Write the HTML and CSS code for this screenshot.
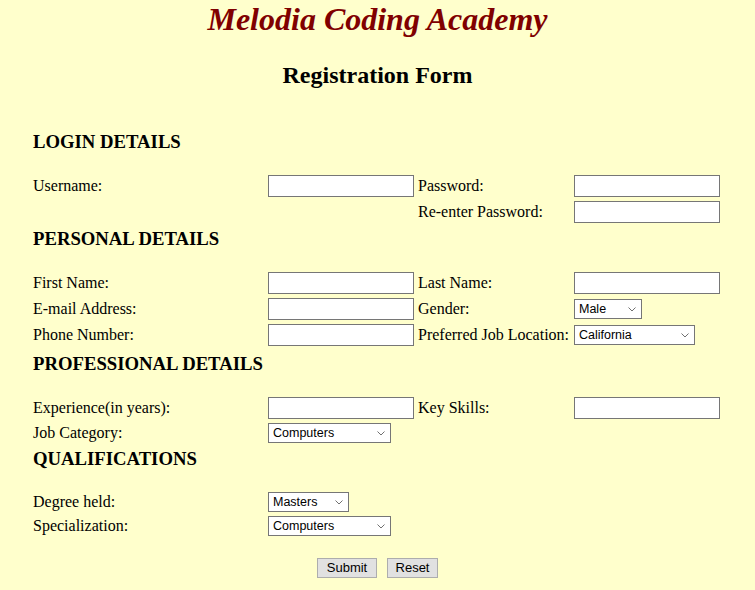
FILE: index.html
```html
<!DOCTYPE html>
<html lang="en">
<head>
<meta charset="utf-8">
<title>Melodia Coding Academy - Registration Form</title>
<link rel="stylesheet" href="styles.css">
</head>
<body>
<h1 class="title">Melodia Coding Academy</h1>
<h2 class="subtitle">Registration Form</h2>
<form class="form">
  <section class="section">
    <h3 class="section-title">LOGIN DETAILS</h3>
    <div class="grid">
      <label class="lbl">Username:</label>
      <input class="field" type="text">
      <label class="lbl">Password:</label>
      <input class="field" type="password">
      <label class="lbl col3">Re-enter Password:</label>
      <input class="field" type="password">
    </div>
  </section>

  <section class="section">
    <h3 class="section-title">PERSONAL DETAILS</h3>
    <div class="grid grid-tall">
      <label class="lbl">First Name:</label>
      <input class="field" type="text">
      <label class="lbl">Last Name:</label>
      <input class="field" type="text">

      <label class="lbl">E-mail Address:</label>
      <input class="field" type="text">
      <label class="lbl">Gender:</label>
      <span class="sel sel-gender">
        <select class="select"><option>Male</option><option>Female</option></select>
        <svg class="chev" width="8" height="5" viewBox="0 0 8 5"><path d="M0.5 0.5 L4 4 L7.5 0.5" fill="none" stroke="#707070" stroke-width="1"/></svg>
      </span>

      <label class="lbl">Phone Number:</label>
      <input class="field" type="text">
      <label class="lbl">Preferred Job Location:</label>
      <span class="sel sel-location">
        <select class="select"><option>California</option><option>New York</option><option>Texas</option></select>
        <svg class="chev" width="8" height="5" viewBox="0 0 8 5"><path d="M0.5 0.5 L4 4 L7.5 0.5" fill="none" stroke="#707070" stroke-width="1"/></svg>
      </span>
    </div>
  </section>

  <section class="section">
    <h3 class="section-title">PROFESSIONAL DETAILS</h3>
    <div class="grid">
      <label class="lbl">Experience(in years):</label>
      <input class="field" type="text">
      <label class="lbl">Key Skills:</label>
      <input class="field" type="text">

      <label class="lbl">Job Category:</label>
      <span class="sel sel-wide">
        <select class="select"><option>Computers</option><option>Finance</option><option>Marketing</option></select>
        <svg class="chev" width="8" height="5" viewBox="0 0 8 5"><path d="M0.5 0.5 L4 4 L7.5 0.5" fill="none" stroke="#707070" stroke-width="1"/></svg>
      </span>
    </div>
  </section>

  <section class="section">
    <h3 class="section-title">QUALIFICATIONS</h3>
    <div class="grid">
      <label class="lbl">Degree held:</label>
      <span class="sel sel-degree">
        <select class="select"><option>Masters</option><option>Bachelors</option><option>PhD</option></select>
        <svg class="chev" width="8" height="5" viewBox="0 0 8 5"><path d="M0.5 0.5 L4 4 L7.5 0.5" fill="none" stroke="#707070" stroke-width="1"/></svg>
      </span>
      <div class="spacer"></div>

      <label class="lbl">Specialization:</label>
      <span class="sel sel-wide">
        <select class="select"><option>Computers</option><option>Electronics</option><option>Mechanical</option></select>
        <svg class="chev" width="8" height="5" viewBox="0 0 8 5"><path d="M0.5 0.5 L4 4 L7.5 0.5" fill="none" stroke="#707070" stroke-width="1"/></svg>
      </span>
    </div>
  </section>

  <div class="actions">
    <button class="btn btn-submit" type="submit">Submit</button>
    <button class="btn btn-reset" type="reset">Reset</button>
  </div>
</form>
</body>
</html>
```

FILE: styles.css
```css
html, body {
  margin: 0;
  padding: 0;
}

body {
  background: #ffffcc;
  font-family: "Liberation Serif", "Times New Roman", serif;
  font-size: 16px;
  color: #000;
}

.title {
  margin: 1px 0 0;
  font-size: 32px;
  line-height: 37px;
  font-style: italic;
  font-weight: bold;
  color: #800000;
  text-align: center;
}

.subtitle {
  margin: 23px 0 42px;
  font-size: 24px;
  line-height: 28px;
  font-weight: bold;
  text-align: center;
}

.form {
  padding-left: 33px;
}

.section-title {
  margin: 5px 0 22px;
  font-size: 18.72px;
  line-height: 22px;
  font-weight: bold;
}

.grid {
  display: grid;
  grid-template-columns: 235px 150px 156px 146px;
  row-gap: 4px;
  align-items: center;
  justify-items: start;
}

.grid-tall {
  padding-bottom: 2px;
}

.lbl {
  font-size: 16px;
  line-height: 18px;
  white-space: nowrap;
}

.col3 {
  grid-column: 3;
}

.spacer {
  grid-column: 3 / 5;
}

.field {
  box-sizing: border-box;
  width: 146px;
  height: 22px;
  margin: 0;
  padding: 1px 2px;
  border: 1px solid #767676;
  background: #fff;
  font: 13px "Liberation Sans", Arial, sans-serif;
}

.sel {
  position: relative;
  display: inline-block;
  height: 20px;
}

.select {
  -webkit-appearance: none;
  appearance: none;
  box-sizing: border-box;
  display: block;
  width: 100%;
  height: 20px;
  margin: 0;
  padding: 0 14px 0 4px;
  border: 1px solid #767676;
  border-radius: 0;
  background: #fff;
  color: #000;
  font: 12.5px "Liberation Sans", Arial, sans-serif;
  line-height: 18px;
}

.chev {
  position: absolute;
  right: 6px;
  top: 8px;
  pointer-events: none;
}

.sel-gender { width: 68px; }
.sel-location { width: 121px; }
.sel-wide { width: 123px; }
.sel-degree { width: 81px; }

.actions {
  display: flex;
  justify-content: center;
  gap: 10px;
  margin-top: 22px;
  margin-left: -33px;
}

.btn {
  box-sizing: border-box;
  height: 20px;
  margin: 0;
  padding: 0;
  border: 1px solid #adadad;
  border-radius: 0;
  background: #e1e1e1;
  color: #000;
  font: 13px "Liberation Sans", Arial, sans-serif;
  line-height: 18px;
}

.btn-submit { width: 60px; }
.btn-reset { width: 51px; }
```
